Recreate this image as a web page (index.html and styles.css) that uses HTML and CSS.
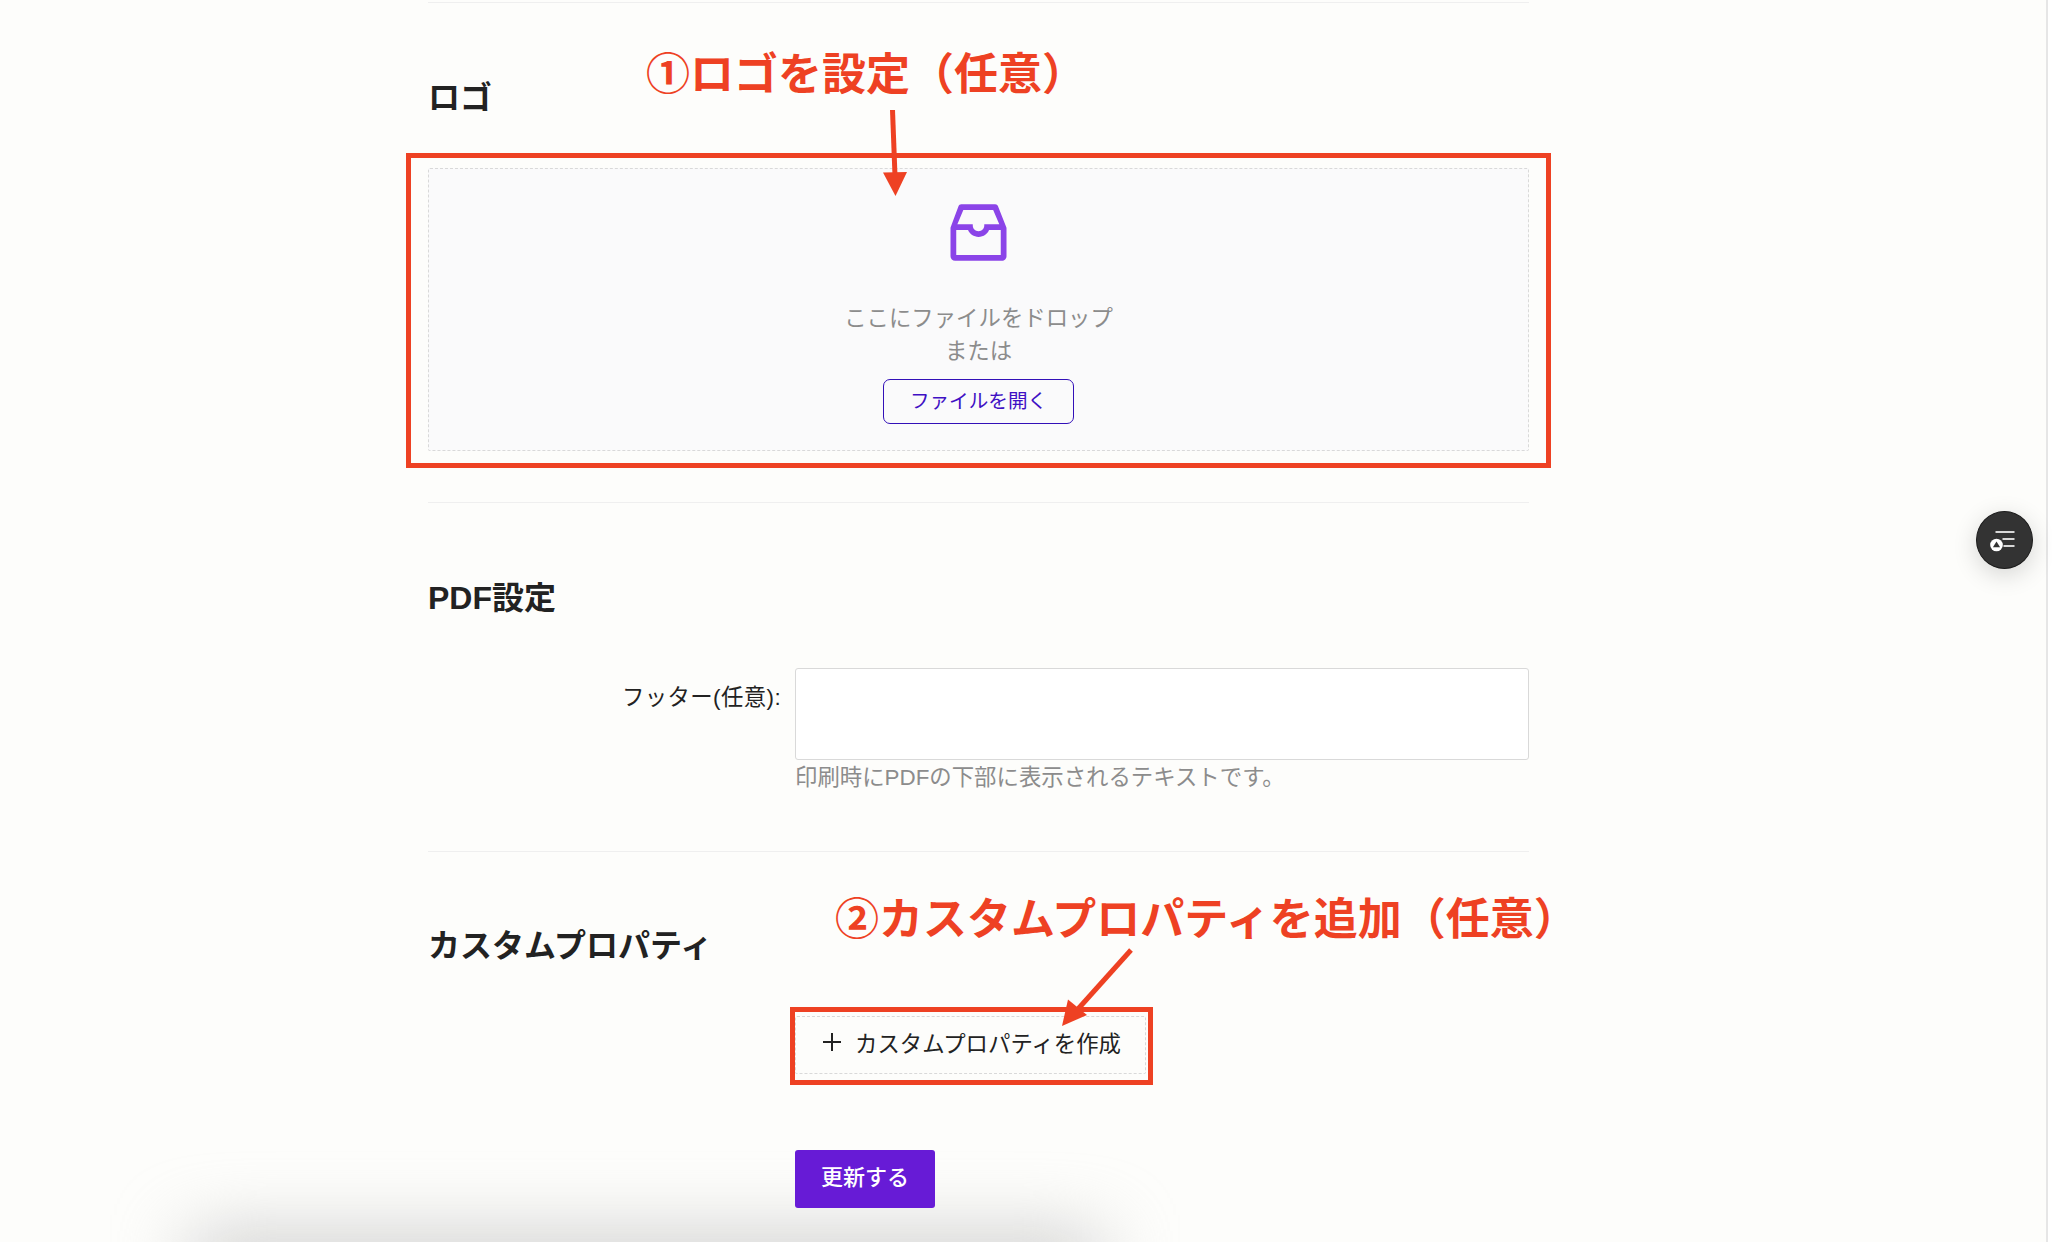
FILE: index.html
```html
<!DOCTYPE html>
<html lang="ja">
<head>
    <meta charset="UTF-8">
    <title>設定</title>
    <link rel="stylesheet" href="styles.css">
</head>
<body>
    <main class="page">
        <section class="section section-logo">
            <h2 class="section-title">ロゴ</h2>
            <div class="dropzone">
                <svg class="inbox-icon" viewBox="64 64 896 896" fill="currentColor">
                    <path d="M885.2 446.3l-.2-.8-112.2-285.1c-5-16.1-19.9-27.2-36.8-27.2H281.2c-17 0-32.1 11.3-36.9 27.6L139.4 443l-.3.7-.2.8c-1.3 4.9-1.7 9.9-1 14.8-.1 1.6-.2 3.2-.2 4.8V830a60.9 60.9 0 0 0 60.8 60.8h627.2c33.5 0 60.8-27.3 60.9-60.8V464.1c0-1.3 0-2.6-.1-3.7.4-4.9 0-9.6-1.3-14.1zm-295.8-43l-.3 15.7c-.8 44.9-31.8 75.1-77.1 75.1-22.1 0-41.1-7.1-54.8-20.6S436 441.2 435.6 419l-.3-15.7H229.5L309 210h399.2l81.7 193.3H589.4zm-375 76.8h157.3c24.3 57.1 76 90.8 140.4 90.8 33.7 0 65-9.4 90.3-27.2 22.2-15.6 39.5-37.4 50.7-63.6h156.5V814H214.4V480.1z"/>
                </svg>
                <p class="dropzone-text">ここにファイルをドロップ<br>または</p>
                <button class="open-button">ファイルを開く</button>
            </div>
        </section>

        <section class="section section-pdf">
            <h2 class="section-title">PDF設定</h2>
            <div class="form-row">
                <label class="form-label">フッター(任意):</label>
                <div class="form-field">
                    <div class="footer-input"></div>
                    <p class="form-hint">印刷時にPDFの下部に表示されるテキストです。</p>
                </div>
            </div>
        </section>

        <section class="section section-custom">
            <h2 class="section-title">カスタムプロパティ</h2>
            <div class="form-row">
                <div class="form-label"></div>
                <div class="form-field">
                    <button class="add-button">
                        <svg class="plus-icon" viewBox="0 0 18 18"><path d="M9 0v18M0 9h18"/></svg>
                        カスタムプロパティを作成
                    </button>
                    <button class="submit-button">更新する</button>
                </div>
            </div>
        </section>
    </main>

    <!-- bottom bar shadow and scroll strip -->
    <div class="bottom-shadow"></div>
    <div class="scroll-strip"></div>

    <button class="float-button">
        <svg viewBox="0 0 30 24" width="30" height="24">
            <path class="float-lines" d="M5.500 4h19M12.500 11h12M13.500 18h11"/>
            <circle cx="6.500" cy="17" r="6.300" fill="#fff"/>
            <path d="M6.500 13.500l3.600 5.800H2.900z" fill="#333"/>
        </svg>
    </button>

    <!-- annotations drawn over the screenshot -->
    <div class="mark mark-logo"></div>
    <div class="mark mark-custom"></div>
    <div class="note note-logo">①ロゴを設定（任意）</div>
    <div class="note note-custom">②カスタムプロパティを追加（任意）</div>
    <svg class="arrows" viewBox="0 0 2052 1242">
        <path class="arrow-line" d="M892.5 110L895 176"/>
        <path class="arrow-head" d="M883 172.500L907 172L895.500 196z"/>
        <path class="arrow-line" d="M1131 950L1078 1009"/>
        <path class="arrow-head" d="M1068 999.500L1087 1015L1062 1026z"/>
    </svg>
</body>
</html>
```

FILE: styles.css
```css
* {
    box-sizing: border-box;
}
html, body {
    margin: 0;
    height: 100%;
    overflow: hidden;
}
body {
    background-color: #fdfdfb;
    color: #222;
    font-family: "Liberation Sans", "Noto Sans CJK JP", sans-serif;
    font-size: 22.4px;
}
.page {
    position: relative;
    z-index: 1;
    width: 1101px;
    margin-left: 428px;
    padding-top: 2px;
}
.section {
    border-top: 1px solid #efefef;
    padding: 74px 0 51px;
}
.section-logo {
    padding-top: 74px;
}
.section-logo .section-title {
    margin-bottom: 49px;
}
.section-pdf {
    padding-bottom: 57px;
}
.section-custom {
    padding: 73px 0 0;
}
.section-title {
    margin: 0 0 49px;
    font-size: 32px;
    line-height: 42px;
    font-weight: 700;
    color: #222;
}

/* logo upload */
.dropzone {
    height: 283px;
    padding-top: 30px;
    display: flex;
    flex-direction: column;
    align-items: center;
    background-color: #fafafb;
    border: 1px dashed #d9d9d9;
    border-radius: 2px;
}
.inbox-icon {
    width: 67px;
    height: 67px;
    color: #8b44e8;
}
.dropzone-text {
    margin: 36px 0 11px;
    line-height: 33px;
    color: #8c8c8c;
    text-align: center;
}
.open-button {
    width: 191px;
    height: 45px;
    padding: 0 0 4px;
    background-color: transparent;
    border: 1px solid #3210b8;
    border-radius: 7px;
    color: #3f10c4;
    font-family: inherit;
    font-size: 19.6px;
}

/* form */
.form-row {
    display: flex;
    gap: 15px;
}
.form-label {
    width: 353px;
    padding-top: 13px;
    flex-shrink: 0;
    letter-spacing: 0.4px;
    text-align: right;
    line-height: 33px;
    white-space: nowrap;
}
.form-field {
    flex: 1;
    margin-left: -1px;
}
.footer-input {
    height: 92px;
    background-color: #fff;
    border: 1px solid #d9d9d9;
    border-radius: 3px;
}
.form-hint {
    margin: 1px 0 0;
    line-height: 33px;
    color: #8c8c8c;
}
.add-button {
    display: flex;
    align-items: center;
    width: 351px;
    height: 58px;
    padding: 0 0 7px 27px;
    background-color: transparent;
    border: 1px dashed #d9d9d9;
    border-radius: 2px;
    color: #222;
    font-family: inherit;
    font-size: 22.4px;
}
.plus-icon {
    width: 18px;
    height: 18px;
    margin-right: 14px;
    stroke: #222;
    stroke-width: 2;
    fill: none;
}
.submit-button {
    display: block;
    width: 140px;
    height: 58px;
    margin-top: 76px;
    padding: 0 0 8px;
    background-color: #671bd6;
    border: 0;
    border-radius: 3px;
    color: #fff;
    font-family: inherit;
    font-size: 22px;
    font-weight: 500;
}

.bottom-shadow {
    position: absolute;
    left: 190px;
    bottom: -46px;
    width: 910px;
    height: 50px;
    background-color: #c4c4c4;
    filter: blur(36px);
}
.scroll-strip {
    position: absolute;
    top: 0;
    right: 0;
    width: 6px;
    height: 100%;
    background-color: #fff;
    border-left: 2px solid #e6e6e6;
}
.float-button {
    position: absolute;
    left: 1976px;
    top: 511px;
    width: 57px;
    height: 58px;
    padding: 0;
    display: flex;
    align-items: center;
    justify-content: center;
    background-color: #333;
    border: 1px solid #1d1d1d;
    border-radius: 50%;
    box-shadow: 0 6px 24px rgba(0, 0, 0, 0.16);
}
.float-lines {
    stroke: #d8d8d8;
    stroke-width: 2;
    fill: none;
}

/* red annotations */
.mark {
    position: absolute;
    z-index: 2;
    border: 5px solid #ee4123;
}
.mark-logo {
    left: 406px;
    top: 153px;
    width: 1145px;
    height: 315px;
}
.mark-custom {
    left: 790px;
    top: 1007px;
    width: 363px;
    height: 78px;
}
.note {
    position: absolute;
    z-index: 2;
    color: #ee4123;
    font-size: 44px;
    font-weight: 700;
    line-height: 60px;
    white-space: nowrap;
}
.note-logo {
    left: 646px;
    top: 45px;
}
.note-custom {
    left: 835px;
    top: 890px;
}
.arrows {
    position: absolute;
    z-index: 2;
    left: 0;
    top: 0;
    width: 2052px;
    height: 1242px;
    pointer-events: none;
}
.arrow-line {
    stroke: #ee4123;
    stroke-width: 5;
    fill: none;
}
.arrow-head {
    fill: #ee4123;
}
```
